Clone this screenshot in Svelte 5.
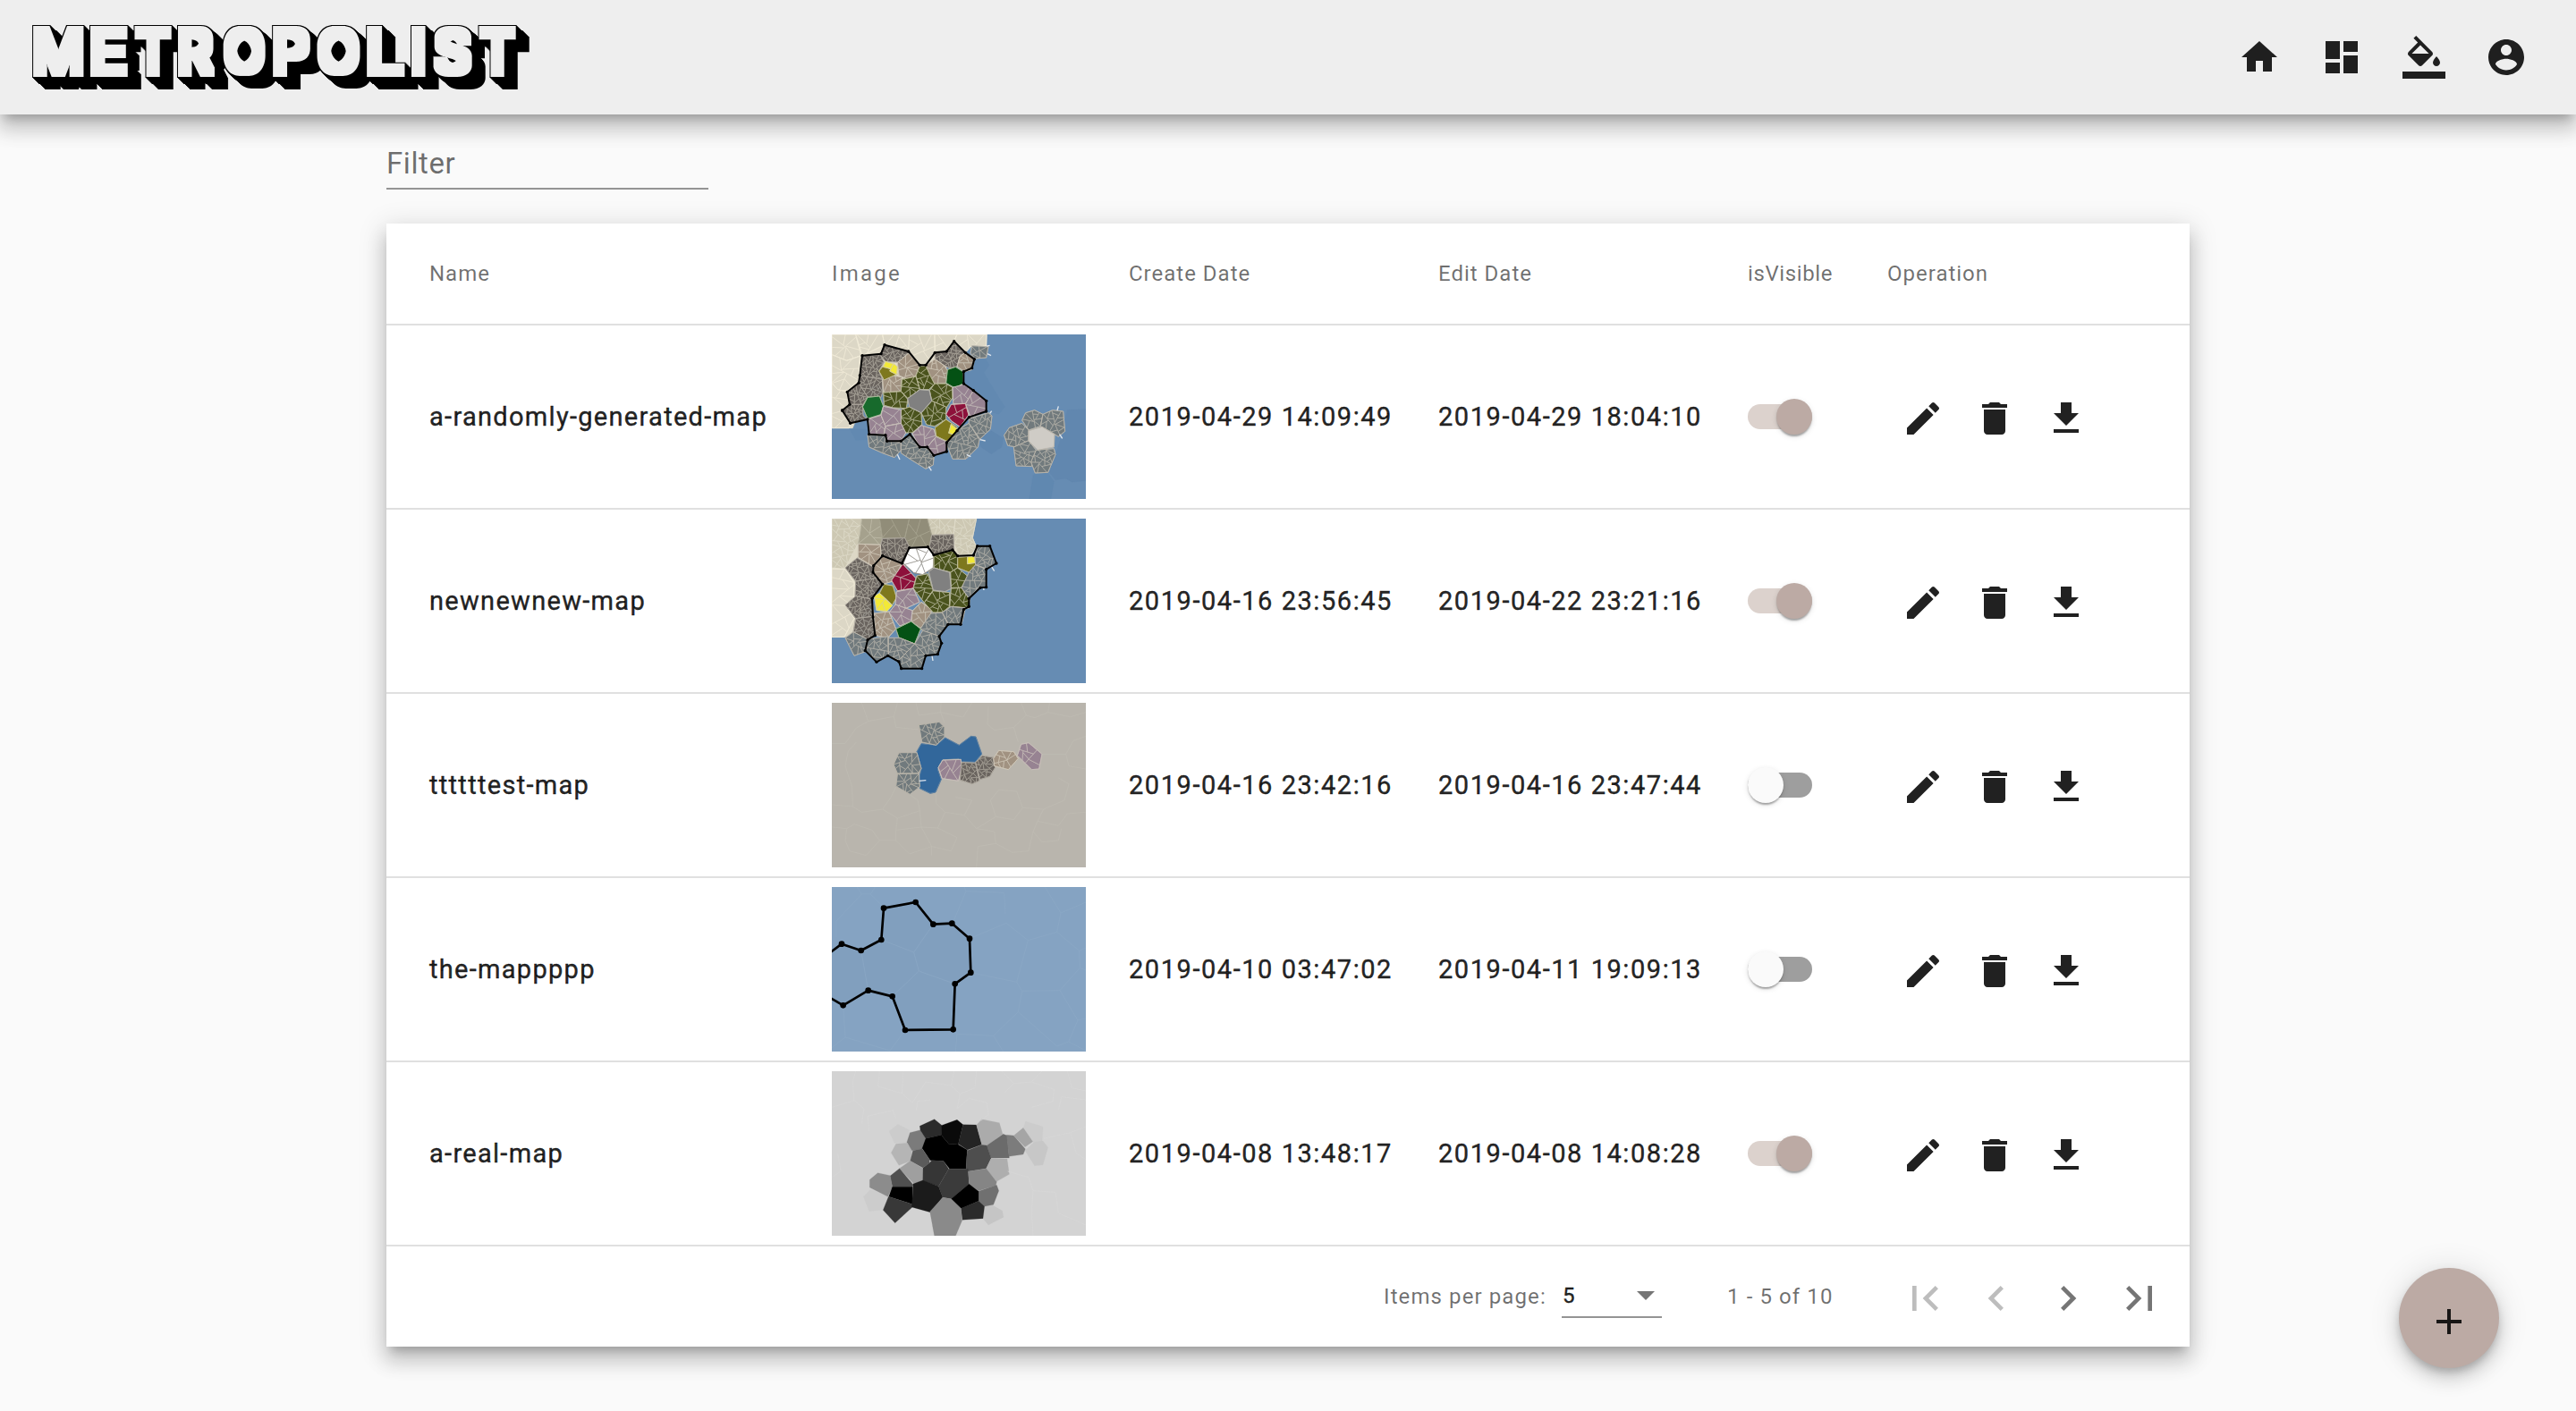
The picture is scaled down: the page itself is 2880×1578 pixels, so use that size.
<script>
  import { onMount } from 'svelte';

  const ICONS = {
    home: 'M10 20v-6h4v6h5v-8h3L12 3 2 12h3v8z',
    dashboard: 'M3 13h8V3H3v10zm0 8h8v-6H3v6zm10 0h8V11h-8v10zm0-18v6h8V3h-8z',
    fill: 'M16.56 8.94L7.62 0 6.21 1.41l2.38 2.38-5.15 5.15c-.59.59-.59 1.54 0 2.12l5.5 5.5c.29.29.68.44 1.06.44s.77-.15 1.06-.44l5.5-5.5c.59-.58.59-1.53 0-2.12zM5.21 10L10 5.21 14.79 10H5.21zM19 11.5s-2 2.17-2 3.5c0 1.1.9 2 2 2s2-.9 2-2c0-1.33-2-3.5-2-3.5zM0 20h24v4H0z',
    account: 'M12 2C6.48 2 2 6.48 2 12s4.48 10 10 10 10-4.48 10-10S17.52 2 12 2zm0 3c1.66 0 3 1.34 3 3s-1.34 3-3 3-3-1.34-3-3 1.34-3 3-3zm0 14.2c-2.5 0-4.71-1.28-6-3.22.03-1.99 4-3.08 6-3.08 1.99 0 5.97 1.09 6 3.08-1.29 1.94-3.5 3.22-6 3.22z',
    edit: 'M3 17.25V21h3.75L17.81 9.94l-3.75-3.75L3 17.25zM20.71 7.04c.39-.39.39-1.02 0-1.41l-2.34-2.34c-.39-.39-1.02-.39-1.41 0l-1.83 1.83 3.75 3.75 1.83-1.83z',
    remove: 'M6 19c0 1.1.9 2 2 2h8c1.1 0 2-.9 2-2V7H6v12zM19 4h-3.5l-1-1h-5l-1 1H5v2h14V4z',
    download: 'M19 9h-4V3H9v6H5l7 7 7-7zM5 18v2h14v-2H5z',
    add: 'M19 13h-6v6h-2v-6H5v-2h6V5h2v6h6v2z',
    first: 'M18.41 16.59L13.82 12l4.59-4.59L17 6l-6 6 6 6zM6 6h2v12H6z',
    prev: 'M15.41 7.41L14 6l-6 6 6 6 1.41-1.41L10.83 12z',
    next: 'M10 6L8.59 7.41 13.17 12l-4.58 4.59L10 18l6-6z',
    last: 'M5.59 7.41L10.18 12l-4.59 4.59L7 18l6-6-6-6zM16 6h2v12h-2z'
  };
  const nav = ['home', 'dashboard', 'fill', 'account'];
  const actions = ['edit', 'remove', 'download'];
  const pager = [['first', true], ['prev', true], ['next', false], ['last', false]];

  /* Wordmark: each glyph is fitted into its own [left, right] box, less the
     square dilation that the block filter adds around it. */
  const BOXES = [[37, 94], [101, 143], [150, 192], [199, 241], [249, 297], [305, 347], [354, 403], [410, 453], [460, 476], [484, 528], [535, 577]];
  const GROW = 5;
  let glyphs = $state([]);
  onMount(() => {
    const ctx = document.createElement('canvas').getContext('2d');
    ctx.font = '400 80px Inter';
    const top = 29 + GROW, bottom = 86 - GROW;
    glyphs = [...'METROPOLIST'].map((ch, i) => {
      const m = ctx.measureText(ch);
      const l = BOXES[i][0] + GROW, r = BOXES[i][1] - GROW;
      const sx = (r - l) / (m.actualBoundingBoxRight + m.actualBoundingBoxLeft);
      const sy = (bottom - top) / (m.actualBoundingBoxAscent + m.actualBoundingBoxDescent);
      return { ch, t: `translate(${l + m.actualBoundingBoxLeft * sx} ${bottom - m.actualBoundingBoxDescent * sy}) scale(${sx} ${sy})` };
    });
  });

  /* District kinds: block colour, road colour, smallest block area. */
  const KINDS = {
    slum: ['#6a645f', '#aba69c', 200],
    craft: ['#a19281', '#cfc7b8', 420],
    trade: ['#4a531d', '#b9b898', 440],
    rich: ['#978392', '#c9c0ba', 650],
    port: ['#717a7d', '#b9b5aa', 340],
    farm: ['#dcd7c6', '#f0ead8', 900],
    farm2: ['#cdc8b3', '#dedac9', 330],
    farm3: ['#a5a18d', '#bdb9a6', 1100],
    farm4: ['#918d79', '#a5a18d', 1500],
    ruby: ['#8d113b', '#cdbdb5', 850],
    white: ['#ffffff', '#8b8882', 1000],
    park: ['#176a2c', '#a9b99a', 1e9],
    wood: ['#045114', '#a9b99a', 1e9],
    plaza: ['#808080', '#b5b2a8', 1e9],
    pale: ['#cfccc6', '#bdb8ae', 1e9],
    mustard: ['#7e781d', '#c3bf9a', 1e9],
    yellow: ['#f2e937', '#d9d2a0', 600],
    deep: ['#32679b', '#5d80a0', 1e9]
  };

  function area(p) {
    let s = 0;
    for (let i = 0; i < p.length; i++) {
      const a = p[i], b = p[(i + 1) % p.length];
      s += a[0] * b[1] - b[0] * a[1];
    }
    return Math.abs(s) / 2;
  }
  function clip(p, c, n) {
    const out = [];
    const side = (q) => (q[0] - c[0]) * n[0] + (q[1] - c[1]) * n[1];
    for (let i = 0; i < p.length; i++) {
      const a = p[i], b = p[(i + 1) % p.length], da = side(a), db = side(b);
      if (da >= 0) out.push(a);
      if (da >= 0 !== db >= 0) {
        const t = da / (da - db);
        out.push([a[0] + (b[0] - a[0]) * t, a[1] + (b[1] - a[1]) * t]);
      }
    }
    return out;
  }
  /* Splits a district into blocks by cutting across its longest edge. */
  function split(p, min, rnd, depthLeft = 7) {
    if (p.length < 3) return [];
    if (depthLeft === 0 || area(p) < min * (1 + rnd())) return [p];
    let best = 0, d = [1, 0];
    for (const a of p) for (const b of p) {
      const l = Math.hypot(b[0] - a[0], b[1] - a[1]);
      if (l > best) { best = l; d = [(b[0] - a[0]) / l, (b[1] - a[1]) / l]; }
    }
    const turn = (rnd() - 0.5) * 0.5;
    const n = [d[0] * Math.cos(turn) - d[1] * Math.sin(turn), d[0] * Math.sin(turn) + d[1] * Math.cos(turn)];
    const c = p.reduce((s, q) => [s[0] + q[0] / p.length, s[1] + q[1] / p.length], [0, 0]);
    const o = (rnd() - 0.5) * best * 0.15;
    const m = [c[0] + n[0] * o, c[1] + n[1] * o];
    return [...split(clip(p, m, n), min, rnd, depthLeft - 1), ...split(clip(p, m, [-n[0], -n[1]]), min, rnd, depthLeft - 1)];
  }
  function pairs(s) {
    const v = s.split(/[ ,]+/).map(Number);
    const out = [];
    for (let i = 0; i < v.length; i += 2) out.push([v[i], v[i + 1]]);
    return out;
  }
  function build(map) {
    let seed = 7;
    const rnd = () => ((seed = (seed * 16807) % 2147483647) / 2147483647);
    const wards = [];
    for (const [kind, list] of map.wards || []) {
      const [fill, road, min] = KINDS[kind];
      for (const s of list) wards.push({ outline: s, fill, road, blocks: split(pairs(s), min, rnd).map((b) => b.map((q) => q.map((x) => x.toFixed(1)).join(',')).join(' ')) });
    }
    return { ...map, wards, towers: map.wall ? pairs(map.wall) : [] };
  }

  const city = {
    box: '30 27 852 552', bg: '#668cb3', tower: 5, line: 6,
    flat: [
      ['#6088b0', '705,500 712,493 755,492 775,520 765,579 692,579'],
      ['#6187af', '820,280 882,278 882,518 835,522 815,510 780,515 760,490 780,430 800,370'],
      ['#6087af', '525,380 565,350 605,375 600,405 565,428 530,405'],
      ['#6289b1', '510,110 545,108 558,130 540,155 560,190 585,230 610,270 590,295 550,285 505,215 475,190 475,152'],
      ['#6289b1', '90,345 148,345 148,380 110,382'],
      ['#e2dccb', '30,27 550,27 548,66 500,64 440,120 330,200 160,200 100,342 30,342']
    ],
    wards: [
      ['farm', ['30,27 110,27 128,98 80,115 30,95', '30,95 80,115 124,100 120,180 82,215 50,215 30,190', '30,190 50,212 82,220 90,262 65,282 92,325 88,341 30,341', '110,27 200,27 207,62 132,98', '200,27 290,27 300,60 287,82 207,62', '290,27 375,27 376,88 345,128 325,130 287,82', '375,27 450,27 440,50 410,85 376,88', '450,27 549,27 548,66 500,64 478,88 440,50']],
      ['slum', ['132,98 192,95 205,120 188,150 200,178 165,185 124,165', '124,165 200,178 200,222 195,238 150,237 120,200', '120,190 150,237 135,262 90,262 82,220', '90,262 133,262 135,300 150,312 92,325 65,282', '207,62 287,84 285,105 250,120 210,118 192,95', '440,50 478,88 460,100 450,135 425,140 400,128 376,110 376,88 410,85']],
      ['craft', ['287,90 325,130 312,165 290,180 255,165 250,122', '345,130 376,110 405,130 420,150 412,190 375,194 358,165', '478,88 500,100 508,115 500,145 475,152 450,135 460,100', '200,178 235,165 265,170 262,218 203,222']],
      ['trade', ['312,165 325,133 345,132 360,165 375,194 355,212 325,212', '265,178 312,168 325,212 285,242 262,218', '203,222 262,218 285,245 280,275 235,273 205,265', '375,192 412,192 435,205 435,240 413,275 365,250 358,215', '365,250 413,270 413,312 375,335 348,330 330,290', '262,280 290,270 330,290 332,330 300,357 275,357 260,325']],
      ['plaza', ['325,212 357,215 365,250 330,290 290,270 284,242']],
      ['park', ['150,238 190,234 203,268 194,296 150,310 133,270']],
      ['wood', ['418,145 445,136 470,152 472,190 445,208 413,190']],
      ['rich', ['435,205 472,195 505,215 500,235 478,260 437,260', '505,215 548,250 548,285 495,305 478,260', '155,310 195,298 210,335 205,362 155,362', '203,268 262,280 262,325 210,335 195,298', '210,335 262,325 278,357 262,385 215,385 205,362', '300,360 330,332 372,345 380,370 350,405 325,405', '350,405 380,370 415,387 415,420 372,433']],
      ['ruby', ['430,262 478,259 489,297 460,337 432,318 413,295']],
      ['mustard', ['376,340 413,312 450,338 450,362 415,385 380,368', '188,150 205,130 250,160 205,180']],
      ['yellow', ['430,328 450,345 445,365 422,358', '210,118 235,125 238,145 202,136', '237,125 250,135 248,162 224,150']],
      ['port', ['500,65 555,68 548,105 510,108 495,90', '150,365 210,365 215,385 262,388 262,415 240,440 200,425 155,405', '262,388 295,362 325,405 350,408 372,440 370,465 345,478 300,450 262,425', '415,395 455,345 490,325 525,380 520,405 480,445 435,445', '490,310 555,290 567,300 562,345 527,378 490,325', '668,315 680,290 710,281 738,295 730,335 690,348', '738,295 770,281 806,285 812,352 790,370 770,358 730,335', '608,365 625,340 668,325 690,348 690,383 650,405 620,400', '640,405 690,383 715,415 700,470 648,468', '715,415 775,410 780,430 755,490 712,492 698,455']],
      ['pale', ['690,350 735,337 777,362 775,405 720,415 690,385']]
    ],
    wall: '65,282 90,262 82,220 120,190 124,165 132,98 195,92 207,62 287,84 325,130 345,130 376,88 415,84 440,50 478,88 508,110 500,140 472,152 472,192 505,215 548,250 548,285 490,305 450,350 415,390 415,420 372,433 350,405 325,405 292,362 262,385 215,385 210,365 155,362 150,312 92,325 65,282',
    piers: ['550,66 560,64', '552,92 564,98', '560,292 566,284', '527,380 545,384', '482,430 496,437', '250,430 258,447', '355,470 364,484', '786,282 790,268', '794,362 803,376']
  };
  const coast = {
    box: '30 30 852 552', bg: '#668cb3', tower: 5, line: 6,
    flat: [['#ddd8c6', '30,30 515,30 502,95 515,122 470,160 200,200 100,428 30,428']],
    wards: [
      ['farm2', ['30,30 130,30 125,75 118,115 75,195 60,198 30,195', '350,30 445,30 438,85 365,85', '445,30 515,30 502,95 515,125 500,150 455,152 438,110 438,85']],
      ['farm', ['30,198 75,200 105,245 105,310 75,320 105,365 72,427 30,427']],
      ['farm3', ['130,30 190,30 200,97 193,118 118,115 125,75']],
      ['farm4', ['190,30 290,30 275,95 200,97', '290,30 350,30 365,85 358,125 288,125 275,95']],
      ['slum', ['200,97 275,95 290,125 270,178 195,155 193,120', '365,85 438,83 440,132 372,152 358,122', '75,195 115,162 168,192 188,230 165,235 110,240', '110,240 188,228 197,250 165,300 108,290', '75,320 110,290 165,300 172,358 110,365', '110,365 168,358 176,422 150,437 102,410']],
      ['craft', ['118,115 193,118 195,155 168,190 118,160', '170,188 200,157 265,180 235,240 202,250 168,212', '172,348 222,342 245,400 218,430 176,422', '300,340 330,310 365,335 362,350 328,398 296,375']],
      ['white', ['270,180 290,128 350,128 372,150 370,195 335,218 305,212']],
      ['ruby', ['268,182 312,230 303,264 250,272 230,237']],
      ['trade', ['372,152 438,136 454,158 452,195 428,210 372,195', '315,222 352,215 370,270 340,312 303,264', '428,210 452,195 488,225 465,262 430,262', '340,312 370,272 425,278 425,325 400,345 370,345', '430,264 465,262 492,300 490,330 425,325']],
      ['plaza', ['355,208 372,195 425,210 430,265 410,275 370,270']],
      ['mustard', ['452,160 515,155 515,185 490,210 452,195', '205,250 235,255 247,295 233,320 190,280']],
      ['yellow', ['485,158 508,158 512,178 485,182', '172,290 190,280 233,322 215,341 180,338']],
      ['rich', ['247,275 303,264 324,310 270,335 243,318', '222,345 243,318 300,338 296,375 258,390']],
      ['wood', ['245,400 296,375 328,400 308,450 255,430']],
      ['port', ['510,155 520,122 560,122 582,180 548,198 512,185', '490,210 512,185 548,200 548,260 520,262 490,298 465,262', '400,345 430,325 478,330 465,385 422,385', '328,398 362,348 400,345 420,385 392,425 340,415', '308,450 335,405 392,425 398,448 385,485 345,490 310,470', '265,480 308,450 345,490 332,533 263,533 250,500', '220,430 258,430 308,450 255,505 218,490', '150,435 218,425 220,490 180,510 145,475', '75,430 102,410 150,435 145,475 105,490']]
    ],
    wall: '200,155 265,180 290,128 352,125 372,152 435,135 452,155 505,153 518,122 560,122 582,180 548,200 548,260 528,262 490,298 490,325 472,335 462,385 420,385 390,425 398,448 385,485 345,490 332,533 263,533 255,510 218,490 180,511 142,473 150,437 175,422 168,360 165,298 200,250 168,210 170,188 200,155',
    piers: ['565,190 575,206', '366,490 369,507', '538,258 540,270']
  };
  const lagoon = {
    box: '30 18 852 552', bg: '#b9b5ad', faint: '#bfbcb4',
    wards: [
      ['deep', ['330,155 382,160 410,135 457,160 497,130 513,132 533,190 510,217 460,215 455,205 400,210 385,240 397,275 378,318 360,322 325,305 322,275 330,240 315,182']],
      ['port', ['322,92 390,82 408,100 408,132 380,160 332,150', '255,185 315,185 330,238 320,255 250,255 237,225', '250,257 322,255 325,300 292,325 245,298']],
      ['rich', ['387,235 402,210 463,208 465,240 455,280 400,272', '652,195 665,157 690,152 735,190 725,240 700,242']],
      ['slum', ['465,218 512,220 525,280 500,290 460,277', '512,218 535,195 575,202 578,235 560,265 527,275']],
      ['craft', ['572,205 590,178 640,182 655,205 622,242 575,230']]
    ],
    piers: ['323,280 346,278'],
    lines: ['30,154 75,154 112,102 152,80 130,18', '152,80 238,64 250,18', '238,64 245,100 320,108', '312,18 322,60 395,50 396,18', '395,50 408,85', '395,50 470,66 500,18', '555,30 552,90 575,110 640,100 682,60 665,18', '682,60 710,68 755,50 760,18', '755,50 830,65 882,50', '640,100 655,150', '735,190 815,190 840,145 882,130', '815,190 825,230 882,240', '30,360 100,366 130,385 200,375 228,335 245,300', '100,366 98,300 75,230 85,180 112,150', '200,375 250,405 325,380 318,345 290,325', '325,380 330,435 245,445 250,405', '330,435 385,438 410,385 380,355 378,318', '410,385 475,395 500,345 445,335', '475,395 515,440 580,400 562,345 590,310 650,315 670,370 640,410 580,400', '670,370 740,375 810,345 825,290 790,270', '740,375 720,415 790,430 820,390 882,385', '720,415 705,450 735,485 790,480 800,440', '30,435 80,440 105,425 165,445 190,480 145,530 90,515 75,480 80,440', '190,480 245,480 245,445', '245,480 290,525 365,500 330,435', '365,530 365,500 430,515 450,470 385,438', '515,570 520,500 580,490 575,450 515,440', '580,490 635,520 690,515 705,450']
  };
  const outline = {
    box: '30 21 852 552', bg: '#85a3c2', faint: '#8ca9c5', tower: 10, line: 8,
    flat: [['#819fbe', '20,240 63,212 128,234 196,198 204,92 311,72 370,146 433,143 492,194 496,308 443,346 437,500 276,501 233,388 152,368 68,418 20,390']],
    wall: '20,244 63,212 128,234 196,198 204,92 311,72 370,146 433,143 492,194 496,308 443,346 437,499 276,501 233,388 152,368 68,418 20,390',
    lines: ['45,190 45,135 130,45 115,21', '130,45 160,45 205,90', '160,45 175,21', '196,198 305,240 370,146', '305,240 322,303 443,346', '322,303 233,388', '128,234 152,368', '435,143 480,35 475,21', '480,35 608,40 612,112', '492,194 615,142 688,200 785,172 798,108 882,72', '798,108 745,21', '688,200 650,340 496,308', '785,172 860,235 862,292 795,368 668,370 650,340', '862,292 882,300', '860,235 882,225', '795,368 855,468 882,462', '855,468 824,540 785,555 655,440 668,370', '655,440 572,520 450,514 437,499', '450,514 445,573', '572,520 605,573', '824,540 882,570', '68,418 75,525 225,570 276,501', '75,525 30,560']
  };
  const heights = {
    box: '30 24 852 552', bg: '#d3d3d3', faint: '#d8d8d8',
    lines: ['30,145 105,122 138,150 130,200', '105,122 100,60 110,24', '190,24 185,75 265,98 270,24', '265,98 300,130 345,60', '150,175 235,155 245,185', '150,175 155,225', '313,155 318,125 360,120', '345,60 430,72 460,100 510,80 515,24', '430,72 440,24', '460,100 450,150 490,115 550,130 555,170 530,190', '600,24 640,65 610,95', '640,65 700,60 775,85 772,125 700,145', '790,155 800,110 882,120', '700,60 735,24', '820,24 835,80 882,90', '620,360 690,380 705,425 780,430 790,500 882,540', '705,425 700,500 705,576', '30,380 60,360 50,300', '740,250 830,230 882,210', '830,230 850,300 882,320'],
    flat: [
      ['#cccccc', '222,225 252,202 290,222 282,265 240,265'], ['#cccccc', '136,445 160,420 218,445 205,488 155,494'], ['#cccccc', '680,192 738,210 735,262 705,262 672,215'], ['#c7c7c7', '678,290 708,262 738,258 755,280 738,338 710,341'], ['#c5c5c5', '542,478 570,474 602,492 606,514 555,540 537,518'],
      ['#b5b5b5', '229,298 245,268 282,265 299,288 294,325 255,340'], ['#7b7b7b', '282,262 292,230 327,221 345,250 345,275 333,285 299,290'], ['#2b2b2b', '325,208 374,185 398,205 397,238 345,250 327,222'], ['#0a0a0a', '397,206 450,187 470,203 454,270 422,268 397,238'], ['#242424', '470,203 515,204 533,270 485,288 454,268'], ['#ababab', '515,205 533,185 592,197 603,235 550,273 533,270'],
      ['#6b6b6b', '550,273 605,235 618,240 625,315 563,315'], ['#7c7c7c', '616,238 640,240 679,285 672,303 624,310'], ['#a5a5a5', '640,240 672,214 704,260 678,278'], ['#000000', '345,250 397,238 422,268 454,270 484,288 480,352 425,352 404,325 360,323 333,283'], ['#5b5b5b', '293,325 302,290 333,284 358,320 357,332 335,348'], ['#4e4e4e', '484,290 533,271 550,273 564,316 548,350 488,360 480,350'], ['#aeaeae', '547,352 565,316 618,318 625,370 583,394'],
      ['#9f9f9f', '257,350 293,325 336,350 335,392 305,402'], ['#505050', '225,376 257,350 303,405 300,412 233,412'], ['#8c8c8c', '157,388 184,365 226,374 233,412 218,445 157,414'], ['#000000', '233,412 301,412 300,470 221,445'], ['#383838', '220,445 300,470 300,480 242,533 202,490'], ['#363636', '336,348 357,332 365,323 404,325 422,352 388,410 335,392'], ['#3b3b3b', '422,352 487,352 490,402 430,452 402,447 388,410'], ['#1b1b1b', '303,402 335,390 388,410 402,447 360,497 298,480'],
      ['#858585', '488,360 548,351 583,395 580,407 522,425 490,402'], ['#707070', '522,427 583,406 590,425 572,472 540,478 522,462'], ['#000000', '430,452 490,402 522,427 522,460 463,485'], ['#2b2b2b', '463,484 522,460 542,478 537,518 468,523'], ['#8a8a8a', '359,495 402,448 430,452 463,484 467,525 445,577 374,577']
    ]
  };

  const rows = [
    { name: 'a-randomly-generated-map', map: build(city), created: '2019-04-29 14:09:49', edited: '2019-04-29 18:04:10', visible: true },
    { name: 'newnewnew-map', map: build(coast), created: '2019-04-16 23:56:45', edited: '2019-04-22 23:21:16', visible: true },
    { name: 'ttttttest-map', map: build(lagoon), created: '2019-04-16 23:42:16', edited: '2019-04-16 23:47:44', visible: false },
    { name: 'the-mappppp', map: build(outline), created: '2019-04-10 03:47:02', edited: '2019-04-11 19:09:13', visible: false },
    { name: 'a-real-map', map: build(heights), created: '2019-04-08 13:48:17', edited: '2019-04-08 14:08:28', visible: true }
  ];
</script>

{#snippet icon(name)}
  <svg class="icon" viewBox="0 0 24 24"><path d={ICONS[name]} /></svg>
{/snippet}

<div class="page">
  <header class="toolbar">
    <svg class="logo" viewBox="0 0 640 128" role="img" aria-label="Metropolist">
      <defs>
        <filter id="block" x="0" y="0" width="640" height="128" filterUnits="userSpaceOnUse" color-interpolation-filters="sRGB">
          <feMorphology in="SourceAlpha" operator="dilate" radius="5" result="body" />
          <feMorphology in="SourceAlpha" operator="dilate" radius="6" result="s0" />
          <feOffset in="s0" dx="1" dy="1" result="o1" />
          <feMerge result="s1"><feMergeNode in="s0" /><feMergeNode in="o1" /></feMerge>
          <feOffset in="s1" dx="2" dy="2" result="o2" />
          <feMerge result="s2"><feMergeNode in="s1" /><feMergeNode in="o2" /></feMerge>
          <feOffset in="s2" dx="4" dy="4" result="o3" />
          <feMerge result="s3"><feMergeNode in="s2" /><feMergeNode in="o3" /></feMerge>
          <feOffset in="s3" dx="7" dy="6" result="o4" />
          <feFlood flood-color="#eeeeee" />
          <feComposite in2="body" operator="in" result="face" />
          <feMerge><feMergeNode in="o4" /><feMergeNode in="s3" /><feMergeNode in="face" /></feMerge>
        </filter>
      </defs>
      <g filter="url(#block)">
        {#each glyphs as g}<text transform={g.t}>{g.ch}</text>{/each}
      </g>
    </svg>
    <nav class="nav">
      {#each nav as n}<button aria-label={n}>{@render icon(n)}</button>{/each}
    </nav>
  </header>

  <main class="content">
    <div class="filter"><span>Filter</span></div>

    <section class="card">
      <div class="row head">
        <span>Name</span><span class="wide">Image</span><span>Create Date</span><span>Edit Date</span><span class="tight">isVisible</span><span>Operation</span>
      </div>
      {#each rows as r}
        <div class="row">
          <span class="name">{r.name}</span>
          <svg class="thumb" viewBox={r.map.box} preserveAspectRatio="none">
            <rect x="0" y="0" width="900" height="600" fill={r.map.bg} />
            {#each r.map.flat || [] as [c, p]}<polygon points={p} fill={c} stroke={c} stroke-width="0.6" />{/each}
            {#each r.map.lines || [] as l}<polyline points={l} fill="none" stroke={r.map.faint} stroke-width="2" />{/each}
            {#each r.map.wards as w}
              {#each w.blocks as b}<polygon points={b} fill={w.fill} stroke={w.road} stroke-width="1.9" />{/each}
              <polygon points={w.outline} fill="none" stroke={w.road} stroke-width="2.6" />
            {/each}
            {#each r.map.piers || [] as l}<polyline points={l} fill="none" stroke="#dfe6ee" stroke-width="4" />{/each}
            {#if r.map.wall}
              <polyline points={r.map.wall} fill="none" stroke="#000" stroke-width={r.map.line} stroke-linejoin="round" />
              {#each r.map.towers as t}<circle cx={t[0]} cy={t[1]} r={r.map.tower} />{/each}
            {/if}
          </svg>
          <span class="date">{r.created}</span>
          <span class="date">{r.edited}</span>
          <div class="toggle" class:on={r.visible}><i></i></div>
          <div class="actions">
            {#each actions as a}<button aria-label={a}>{@render icon(a)}</button>{/each}
          </div>
        </div>
      {/each}
      <footer class="pager">
        <span class="label">Items per page:</span>
        <div class="select"><span>5</span><b></b></div>
        <span class="range">1 - 5 of 10</span>
        {#each pager as [p, off]}<button class="step" class:off aria-label={p}>{@render icon(p)}</button>{/each}
      </footer>
    </section>
  </main>

  <button class="fab" aria-label="add">{@render icon('add')}</button>
</div>

<style>
  :global(body) { margin: 0; background: #fafafa; overflow: hidden; }
  .page { height: 1578px; background: #fafafa; font-family: Roboto, "Liberation Sans", sans-serif; color: rgba(0, 0, 0, 0.87); }
  button { border: 0; padding: 0; background: none; color: inherit; display: flex; align-items: center; justify-content: center; }
  .icon { width: 48px; height: 48px; fill: currentColor; display: block; }

  .toolbar { position: relative; height: 128px; background: #eee; display: flex; justify-content: space-between; align-items: center; padding-right: 54px; box-shadow: 0 10px 10px -6px rgba(0,0,0,.2), 0 16px 20px 2px rgba(0,0,0,.14), 0 6px 28px 4px rgba(0,0,0,.12); }
  .logo { width: 640px; height: 128px; display: block; }
  .logo text { font: 400 80px Inter, sans-serif; fill: #000; }
  .nav { display: flex; gap: 44px; }

  .content { width: 2016px; margin: 0 auto; padding-top: 2px; }
  .filter { width: 360px; height: 82px; box-sizing: border-box; border-bottom: 2px solid #949494; padding-top: 31px; margin-bottom: 38px; }
  .filter span { display: block; font-size: 33px; line-height: 44px; letter-spacing: 0.6px; color: rgba(0,0,0,.56); }

  .card { background: #fff; box-shadow: 0 10px 10px -6px rgba(0,0,0,.2), 0 16px 20px 2px rgba(0,0,0,.14), 0 6px 28px 4px rgba(0,0,0,.12); }
  .row { display: grid; grid-template-columns: 450px 332px 346px 346px 156px 1fr; align-items: center; height: 204px; padding-left: 48px; border-bottom: 2px solid #e0e0e0; font-size: 29px; }
  .head { height: 112px; font-size: 24px; letter-spacing: 1px; color: rgba(0,0,0,.56); }
  .wide { letter-spacing: 2.2px; }
  .tight { letter-spacing: 0.6px; }
  .name { letter-spacing: 1.3px; -webkit-text-stroke: 0.4px; }
  .date { letter-spacing: 1.55px; white-space: nowrap; -webkit-text-stroke: 0.4px; }
  .thumb { width: 284px; height: 184px; display: block; }

  .toggle { width: 72px; height: 28px; border-radius: 14px; background: #9e9e9e; display: flex; align-items: center; }
  .toggle i { width: 40px; height: 40px; flex: none; border-radius: 50%; background: #fafafa; box-shadow: 0 4px 2px -2px rgba(0,0,0,.2), 0 2px 2px rgba(0,0,0,.14), 0 2px 6px rgba(0,0,0,.12); }
  .toggle.on { background: #dcd2cd; justify-content: flex-end; }
  .toggle.on i { background: #bcaaa4; }
  .actions { display: flex; padding-top: 4px; }
  .actions button { width: 80px; height: 80px; }

  .pager { height: 112px; display: flex; align-items: center; justify-content: flex-end; padding-right: 16px; font-size: 24px; color: rgba(0,0,0,.56); box-sizing: border-box; }
  .label { width: 199px; letter-spacing: 1.1px; white-space: nowrap; }
  .select { width: 112px; height: 46px; align-self: flex-start; padding-top: 32px; border-bottom: 2px solid #949494; display: flex; align-items: center; justify-content: space-between; color: rgba(0,0,0,.87); }
  .select span { padding-left: 1px; -webkit-text-stroke: 0.4px; }
  .select b { margin-right: 8px; border: 10px solid transparent; border-top-color: #757575; border-bottom: 0; }
  .range { padding-left: 73px; width: 181px; letter-spacing: 1.1px; white-space: nowrap; }
  .step { width: 80px; height: 80px; padding-top: 4px; color: #757575; }
  .step .icon { width: 56px; height: 56px; }
  .step.off { color: #bdbdbd; }

  .fab { position: absolute; left: 2682px; top: 1418px; width: 112px; height: 112px; border-radius: 50%; background: #bcaaa4; padding-top: 8px; color: rgba(0,0,0,.87); box-sizing: border-box; box-shadow: 0 6px 10px -2px rgba(0,0,0,.2), 0 12px 20px rgba(0,0,0,.14), 0 2px 36px rgba(0,0,0,.12); }
</style>
